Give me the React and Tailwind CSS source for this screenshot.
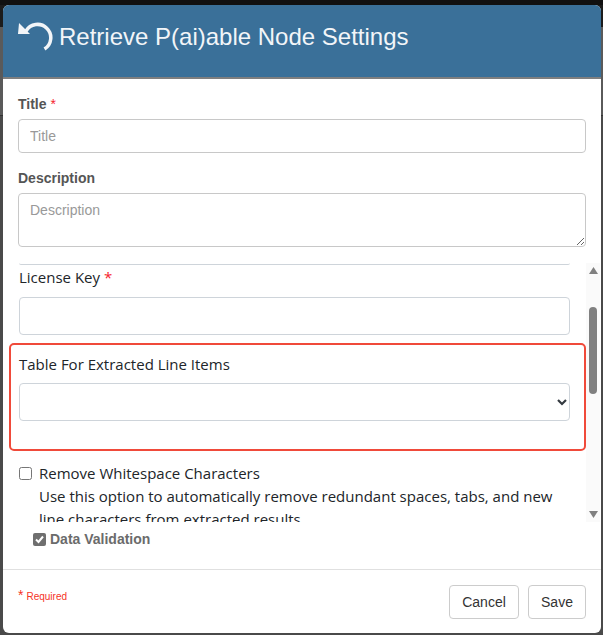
const sans = "font-['Liberation_Sans',Arial,sans-serif]";
const segoe = "font-['Open_Sans','Noto_Sans',sans-serif]";

const UndoIcon = () => (
  <svg width="36" height="31" viewBox="0 0 36 31" fill="none" className="mt-[1px] shrink-0">
    <path d="M8 9A13.300 13.300 0 1 1 26.500 27" stroke="#f2f5f8" strokeWidth="3.500" />
    <path d="M1 1L0 12H12Z" fill="#f2f5f8" />
  </svg>
);

const Req = ({ className = "" }) => <span className={`text-[#f5222d] ${className}`}>*</span>;

const App = () => {
  return (
    <div className="h-[635px] w-[603px] overflow-hidden bg-[linear-gradient(#111111_0_5px,#1c1c1c_5px_27px,#5a5a5a_27px_115px,#333333_115px_116px,#4a4a4a_116px)]">
      <div className="h-[5px]" />
      <div className={`ml-[3px] flex h-[628px] w-[598px] flex-col overflow-hidden rounded-[6px] bg-white ${sans}`}>
        <div className="flex h-[74px] shrink-0 items-start gap-[5px] border-b-2 border-[#7f7f7f] bg-[#3a7099] pl-[15px] pt-[16px]">
          <UndoIcon />
          <h1 className="text-[24px] leading-[32px] text-[#f2f5f8]">Retrieve P(ai)able Node Settings</h1>
        </div>

        <div className="flex min-h-0 flex-1 flex-col pt-[16px]">
          <div className="px-[15px]">
            <label className="block text-[14px] font-bold leading-[18px] text-[#555555]">
              Title <Req className="font-normal" />
            </label>
            <input
              placeholder="Title"
              className="mt-[6px] block h-[34px] w-[568px] rounded-[4px] border border-[#c8c8c8] px-[11px] text-[14px] outline-none placeholder:text-[#999999]"
            />
            <label className="mt-[16px] block text-[14px] font-bold leading-[18px] text-[#555555]">Description</label>
            <textarea
              placeholder="Description"
              className="mt-[6px] block h-[54px] w-[568px] rounded-[4px] border border-[#c8c8c8] px-[11px] py-[6px] text-[14px] outline-none placeholder:text-[#999999]"
            />
          </div>

          <div className="mt-[16px] flex h-[259px] shrink-0 pl-[6px]">
            <div className={`h-full w-[577px] shrink-0 overflow-hidden ${segoe} text-[15px] text-[#212529]`}>
              <div className="ml-[10px] h-[2px] w-[551px] rounded-b-[4px] border-b border-[#ced4da]" />
              <label className="ml-[10px] block leading-[24px]">
                License Key <Req />
              </label>
              <input className="ml-[10px] mt-[8px] block h-[38px] w-[551px] rounded-[4px] border border-[#ced4da] outline-none" />
              <div className="mt-[8px] h-[108px] w-[577px] rounded-[5px] border-2 border-[#f04a3a] pl-[8px] pt-[7px]">
                <label className="block leading-[24px]">Table For Extracted Line Items</label>
                <div className="mt-[7px] flex h-[38px] w-[551px] items-center justify-end rounded-[4px] border border-[#ced4da] pr-[2px]">
                  <svg width="10" height="8" viewBox="0 0 10 8" fill="none">
                    <path d="M1 2L5 6L9 2" stroke="#343a40" strokeWidth="2.200" />
                  </svg>
                </div>
              </div>
              <div className="ml-[10px] mt-[11px] flex items-start gap-[7px]">
                <span className="mt-[5px] h-[13px] w-[13px] shrink-0 rounded-[2.500px] border border-[#767676] bg-white" />
                <div className="w-[520px] leading-[23px]">
                  <p>Remove Whitespace Characters</p>
                  <p>Use this option to automatically remove redundant spaces, tabs, and new line characters from extracted results.</p>
                </div>
              </div>
            </div>
            <div className="flex h-full w-[14px] shrink-0 flex-col items-center bg-[#fafafa] py-[4px]">
              <svg width="9" height="7" viewBox="0 0 9 7" className="shrink-0"><path d="M4.500 0L9 7H0Z" fill="#808080" /></svg>
              <div className="mt-[33px] h-[87px] w-[8px] rounded-[4px] bg-[#808080]" />
              <svg width="9" height="7" viewBox="0 0 9 7" className="mt-auto shrink-0"><path d="M0 0H9L4.500 7Z" fill="#808080" /></svg>
            </div>
          </div>

          <div className="ml-[30px] mt-[8px] flex items-center gap-[4px]">
            <span className="flex h-[13px] w-[13px] items-center justify-center rounded-[2px] bg-[#6f6f6f]">
              <svg width="11" height="11" viewBox="0 0 11 11" fill="none">
                <path d="M2 5.500L4.500 8L9 2.500" stroke="white" strokeWidth="2" />
              </svg>
            </span>
            <span className="text-[14px] font-bold leading-[18px] text-[#6b6b6b]">Data Validation</span>
          </div>

          <div className="mt-[21px] flex flex-1 items-start justify-between border-t border-[#e0e0e0] pl-[15px] pr-[15px] pt-[15px]">
            <div className="mt-[2px] flex items-start text-[#f5331f]">
              <span className="text-[14px] leading-[16px]">*</span>
              <span className="ml-[3px] mt-[3px] text-[10px] leading-[14px]">Required</span>
            </div>
            <div className="flex gap-[9px] text-[14px] text-[#333333]">
              <button className="h-[34px] w-[70px] rounded-[4px] border border-[#cccccc] bg-white">Cancel</button>
              <button className="h-[34px] w-[58px] rounded-[4px] border border-[#cccccc] bg-white">Save</button>
            </div>
          </div>
        </div>
      </div>
    </div>
  );
};

export default App;
